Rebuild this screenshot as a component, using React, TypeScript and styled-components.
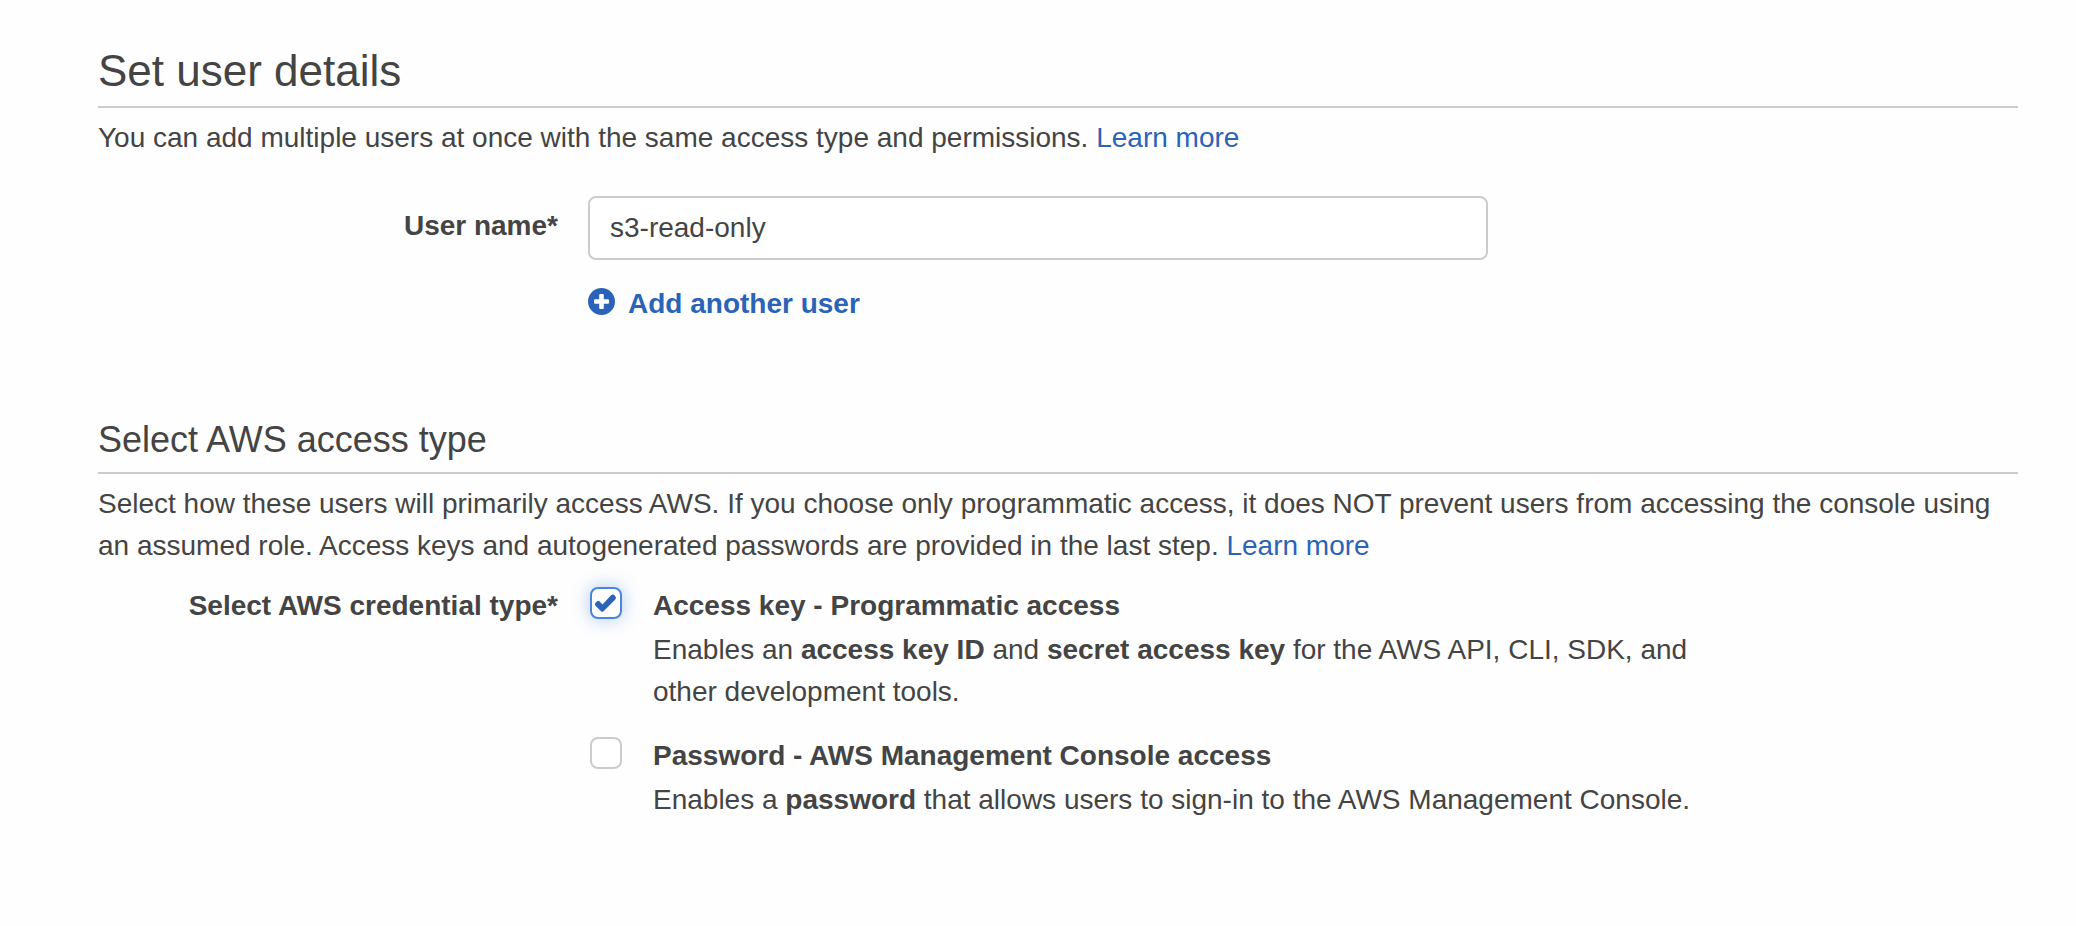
import React, { useState } from "react";
import styled, { createGlobalStyle } from "styled-components";

const GlobalStyle = createGlobalStyle`
  *, *::before, *::after { box-sizing: border-box; }
  body {
    margin: 0;
    background: #fefefe;
    color: #444;
    font-family: "Helvetica Neue", "Liberation Sans", Arial, sans-serif;
    font-size: 28px;
    line-height: 42px;
  }
`;

const Page = styled.main`
  display: flex;
  flex-direction: column;
  gap: 87px;
  padding: 40px 58px 64px 98px;
`;

const Section = styled.section`
  display: flex;
  flex-direction: column;
`;

const PageHeading = styled.h1`
  margin: 0 0 9px;
  padding-bottom: 4px;
  border-bottom: 2px solid #ccc;
  font-size: 44px;
  line-height: 62px;
  font-weight: 400;
`;

const SectionHeading = styled(PageHeading).attrs({ as: "h2" })`
  font-size: 36px;
  line-height: 56px;
`;

const Intro = styled.p<{ $gap: number }>`
  margin: 0 0 ${({ $gap }) => $gap}px;
`;

const Link = styled.a`
  color: #2a63b8;
  text-decoration: none;
  &:hover { text-decoration: underline; }
`;

const FormRow = styled.div`
  display: grid;
  grid-template-columns: minmax(0, 460px) minmax(0, 1fr);
  column-gap: 30px;
`;

const FieldLabel = styled.label`
  padding-top: 9px;
  font-weight: 700;
  text-align: right;
`;

const GroupLabel = styled.div`
  font-weight: 700;
  text-align: right;
`;

const FieldColumn = styled.div`
  display: flex;
  flex-direction: column;
  align-items: flex-start;
  gap: 23px;
  max-width: 900px;
`;

const TextInput = styled.input`
  width: 100%;
  height: 64px;
  padding: 0 20px;
  border: 2px solid #ccc;
  border-radius: 8px;
  background: #fff;
  color: inherit;
  font: inherit;
  outline: none;
`;

const AddButton = styled.button`
  display: flex;
  align-items: center;
  gap: 12px;
  padding: 0;
  border: 0;
  background: none;
  color: #2a63b8;
  font: inherit;
  font-weight: 700;
  cursor: pointer;

  svg { width: 28px; height: 28px; flex: none; margin-bottom: 4px; }
`;

const OptionList = styled.div`
  display: flex;
  flex-direction: column;
  gap: 22px;
  max-width: 1110px;
  padding-left: 2px;
`;

const Option = styled.div`
  display: grid;
  grid-template-columns: 32px minmax(0, 1fr);
  column-gap: 31px;
  row-gap: 2px;
`;

const CheckHolder = styled.span`
  display: grid;
  height: 32px;
  margin-top: 2px;

  > * { grid-area: 1 / 1; }
  svg { width: 32px; height: 32px; pointer-events: none; }
`;

const CheckInput = styled.input`
  appearance: none;
  width: 32px;
  height: 32px;
  margin: 0;
  border: 2px solid #ccc;
  border-radius: 8px;
  background: #fff;

  &:checked {
    border-color: #4a86db;
    box-shadow: 0 0 18px rgba(74, 134, 219, 0.45);
  }
`;

const OptionTitle = styled.label`
  font-weight: 700;
`;

const OptionText = styled.p`
  grid-column: 2;
  margin: 0;
`;

const PlusIcon = () => (
  <svg viewBox="0 0 28 28" aria-hidden="true">
    <circle cx="13.5" cy="13.5" r="13.5" fill="#2a63b8" />
    <path
      d="M12.200 6h2.600a1 1 0 0 1 1 1v4.200H20a1 1 0 0 1 1 1v2.600a1 1 0 0 1-1 1h-4.200V20a1 1 0 0 1-1 1h-2.600a1 1 0 0 1-1-1v-4.200H7a1 1 0 0 1-1-1v-2.600a1 1 0 0 1 1-1h4.200V7a1 1 0 0 1 1-1z"
      fill="#fff"
    />
  </svg>
);

const CheckIcon = () => (
  <svg viewBox="0 0 32 32" aria-hidden="true">
    <path
      d="M5.300 16.200l1.900-1.900q1.100-1 2.200 0l3.100 3.100 8.300-8.900q2-2 4.200 0.200 1.900 2 0.300 3.900L13.600 24.200q-1.300 1.200-2.600 0l-5.700-5.800q-1-1.100 0-2.200z"
      fill="#2a63b8"
    />
  </svg>
);

interface CredentialOptionProps {
  id: string;
  title: string;
  initial?: boolean;
  children: React.ReactNode;
}

function CredentialOption({ id, title, initial = false, children }: CredentialOptionProps) {
  const [checked, setChecked] = useState(initial);
  return (
    <Option>
      <CheckHolder>
        <CheckInput
          id={id}
          type="checkbox"
          checked={checked}
          onChange={(e) => setChecked(e.target.checked)}
          aria-describedby={`${id}-text`}
        />
        {checked && <CheckIcon />}
      </CheckHolder>
      <OptionTitle htmlFor={id}>{title}</OptionTitle>
      <OptionText id={`${id}-text`}>{children}</OptionText>
    </Option>
  );
}

export default function App() {
  const [userName, setUserName] = useState("s3-read-only");
  return (
    <>
      <GlobalStyle />
      <Page>
        <Section>
          <PageHeading>Set user details</PageHeading>
          <Intro $gap={37}>
            You can add multiple users at once with the same access type and permissions.{" "}
            <Link href="#users">Learn more</Link>
          </Intro>
          <FormRow>
            <FieldLabel htmlFor="user-name">User name*</FieldLabel>
            <FieldColumn>
              <TextInput
                id="user-name"
                type="text"
                value={userName}
                onChange={(e) => setUserName(e.target.value)}
              />
              <AddButton type="button">
                <PlusIcon />
                Add another user
              </AddButton>
            </FieldColumn>
          </FormRow>
        </Section>

        <Section>
          <SectionHeading>Select AWS access type</SectionHeading>
          <Intro $gap={18}>
            Select how these users will primarily access AWS. If you choose only programmatic access, it does NOT
            prevent users from accessing the console using an assumed role. Access keys and autogenerated passwords
            are provided in the last step. <Link href="#access">Learn more</Link>
          </Intro>
          <FormRow role="group" aria-labelledby="credential-type">
            <GroupLabel id="credential-type">Select AWS credential type*</GroupLabel>
            <OptionList>
              <CredentialOption id="access-key" title="Access key - Programmatic access" initial>
                Enables an <b>access key ID</b> and <b>secret access key</b> for the AWS API, CLI, SDK, and other
                development tools.
              </CredentialOption>
              <CredentialOption id="password" title="Password - AWS Management Console access">
                Enables a <b>password</b> that allows users to sign-in to the AWS Management Console.
              </CredentialOption>
            </OptionList>
          </FormRow>
        </Section>
      </Page>
    </>
  );
}
